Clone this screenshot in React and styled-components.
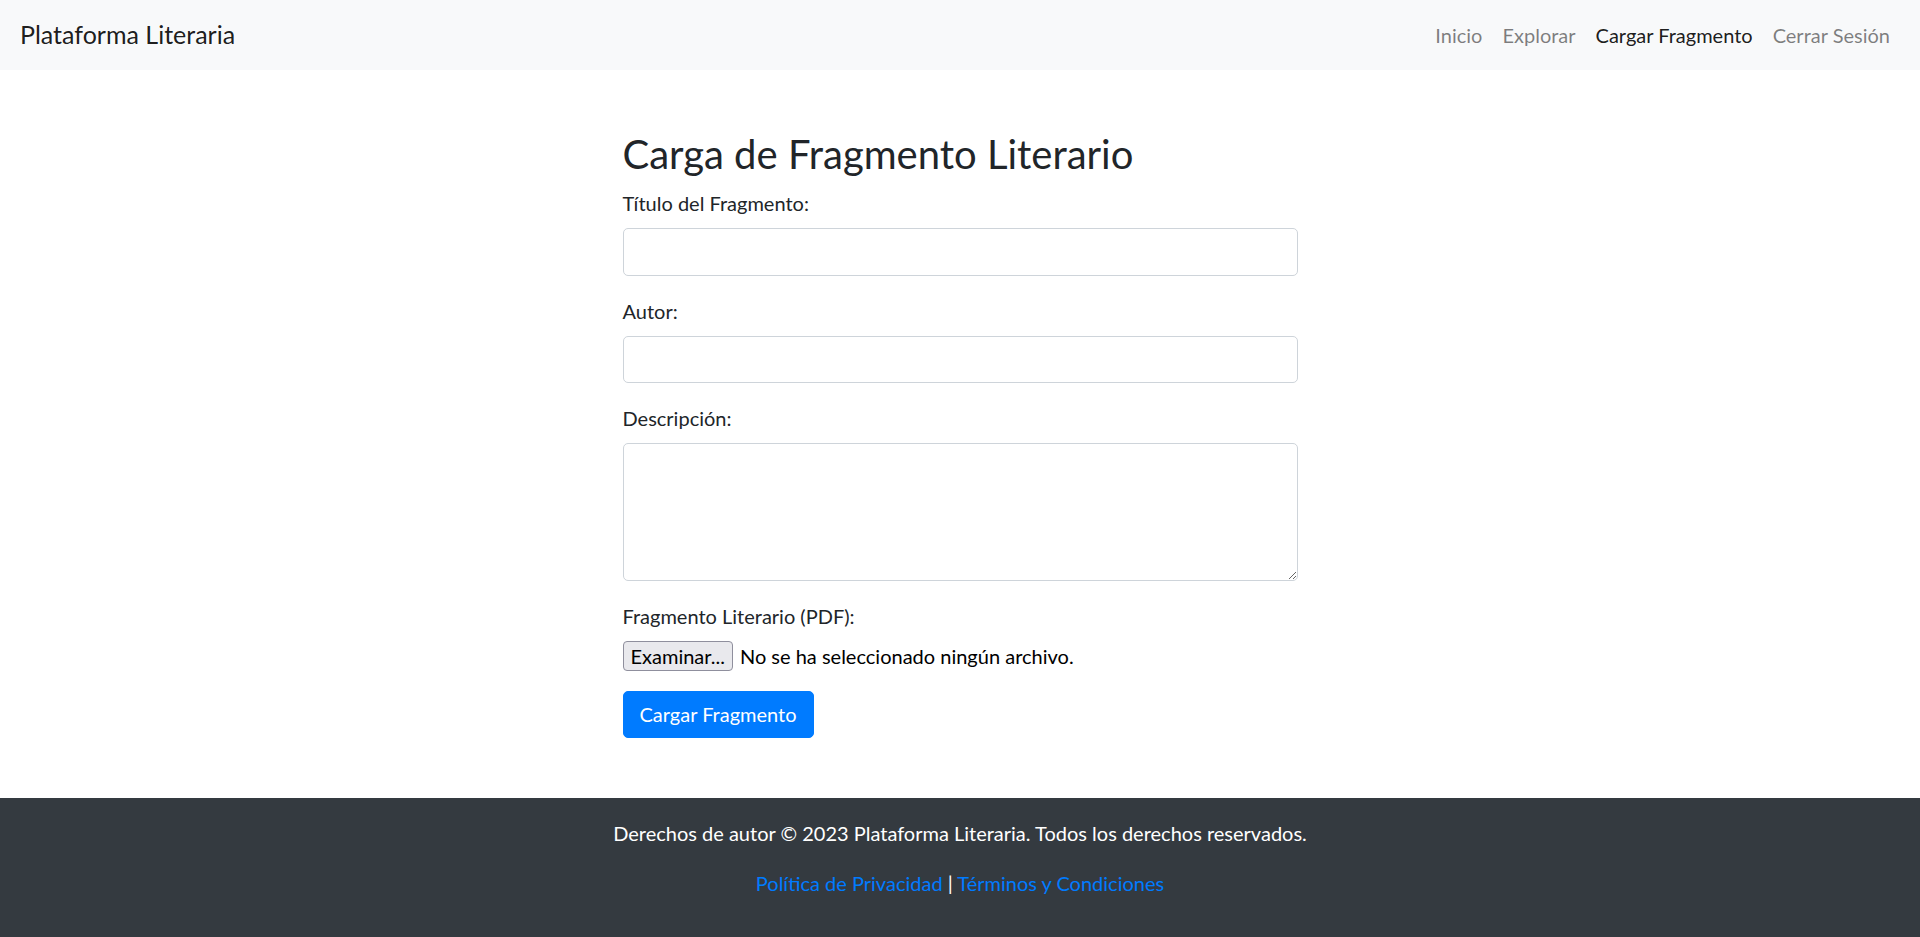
import React from "react";
import styled, { createGlobalStyle } from "styled-components";

const GlobalStyle = createGlobalStyle`
  html, body {
    margin: 0;
    padding: 0;
  }
  body {
    font-family: "Lato", "Noto Sans", sans-serif;
    font-size: 20px;
    line-height: 30px;
    color: #212529;
    background: #fff;
  }
  *, *::before, *::after {
    box-sizing: border-box;
  }
`;

const navLinks = [
  { label: "Inicio", active: false },
  { label: "Explorar", active: false },
  { label: "Cargar Fragmento", active: true },
  { label: "Cerrar Sesión", active: false },
];

export default function App() {
  return (
    <Page>
      <GlobalStyle />
      <Navbar>
        <Brand href="#">Plataforma Literaria</Brand>
        <NavList>
          {navLinks.map((link) => (
            <li key={link.label}>
              <NavLink href="#" $active={link.active}>
                {link.label}
              </NavLink>
            </li>
          ))}
        </NavList>
      </Navbar>

      <Main>
        <Column>
          <Title>Carga de Fragmento Literario</Title>
          <form onSubmit={(e) => e.preventDefault()}>
            <FormGroup>
              <Label htmlFor="titulo">Título del Fragmento:</Label>
              <Input id="titulo" type="text" />
            </FormGroup>
            <FormGroup>
              <Label htmlFor="autor">Autor:</Label>
              <Input id="autor" type="text" />
            </FormGroup>
            <FormGroup>
              <Label htmlFor="descripcion">Descripción:</Label>
              <TextArea id="descripcion" rows={4} />
            </FormGroup>
            <FormGroup>
              <Label htmlFor="archivo">Fragmento Literario (PDF):</Label>
              <FileRow>
                <HiddenFile id="archivo" type="file" accept="application/pdf" />
                <FileButton htmlFor="archivo">Examinar...</FileButton>
                <FileStatus>No se ha seleccionado ningún archivo.</FileStatus>
              </FileRow>
            </FormGroup>
            <SubmitButton type="submit">Cargar Fragmento</SubmitButton>
          </form>
        </Column>
      </Main>

      <Footer>
        <FooterText>
          Derechos de autor © 2023 Plataforma Literaria. Todos los derechos
          reservados.
        </FooterText>
        <FooterText>
          <FooterLink href="#">Política de Privacidad</FooterLink> |{" "}
          <FooterLink href="#">Términos y Condiciones</FooterLink>
        </FooterText>
      </Footer>
    </Page>
  );
}

const Page = styled.div`
  min-height: 100vh;
  display: flex;
  flex-direction: column;
`;

const Navbar = styled.nav`
  height: 70px;
  padding: 10px 20px;
  background-color: #f8f9fa;
  display: flex;
  align-items: center;
  justify-content: space-between;
`;

const Brand = styled.a`
  font-size: 25px;
  line-height: 37.5px;
  color: rgba(0, 0, 0, 0.9);
  text-decoration: none;
  white-space: nowrap;
`;

const NavList = styled.ul`
  display: flex;
  list-style: none;
  margin: 0;
  padding: 0;
`;

const NavLink = styled.a`
  display: block;
  padding: 10px;
  color: ${({ $active }) => ($active ? "rgba(0, 0, 0, 0.9)" : "rgba(0, 0, 0, 0.5)")};
  text-decoration: none;
`;

const Main = styled.main`
  flex: 1;
  padding: 60px 0;
`;

const Column = styled.div`
  width: 675px;
  margin: 0 auto;
`;

const Title = styled.h2`
  margin: 0 0 10px;
  font-size: 40px;
  line-height: 48px;
  font-weight: 400;
`;

const FormGroup = styled.div`
  margin-bottom: 20px;
`;

const Label = styled.label`
  display: inline-block;
  margin-bottom: 10px;
`;

const fieldStyles = `
  display: block;
  width: 100%;
  padding: 7.5px 15px;
  font: inherit;
  color: #495057;
  background: #fff;
  border: 1px solid #ced4da;
  border-radius: 5px;
  outline: none;
`;

const Input = styled.input`
  ${fieldStyles}
  height: 47.5px;
`;

const TextArea = styled.textarea`
  ${fieldStyles}
  height: 137.5px;
  resize: vertical;
`;

const FileRow = styled.div`
  display: flex;
  align-items: center;
  gap: 7px;
  height: 30px;
`;

const HiddenFile = styled.input`
  display: none;
`;

const FileButton = styled.label`
  height: 30px;
  padding: 0 7px;
  display: flex;
  align-items: center;
  font-size: 20px;
  color: #000;
  background: #e9e9ed;
  border: 1px solid #8f8f9d;
  border-radius: 4px;
  cursor: pointer;
`;

const FileStatus = styled.span`
  color: #000;
`;

const SubmitButton = styled.button`
  height: 47.5px;
  padding: 0 16px;
  font: inherit;
  color: #fff;
  background-color: #007bff;
  border: 1px solid #007bff;
  border-radius: 5px;
  cursor: pointer;
`;

const Footer = styled.footer`
  padding: 20px;
  background-color: #343a40;
  color: #fff;
  text-align: center;
`;

const FooterText = styled.p`
  margin: 0 0 20px;
`;

const FooterLink = styled.a`
  color: #007bff;
  text-decoration: none;
`;
